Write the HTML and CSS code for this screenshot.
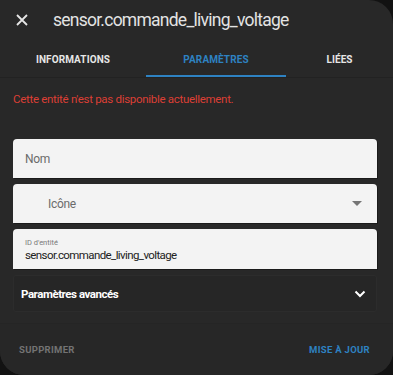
FILE: index.html
```html
<!DOCTYPE html>
<html lang="fr">
<head>
    <meta charset="UTF-8">
    <meta name="viewport" content="width=device-width, initial-scale=1.0">
    <title>sensor.commande_living_voltage</title>
    <link rel="stylesheet" href="styles.css">
</head>
<body>
    <div class="dialog">
        <div class="dialog__header">
            <button class="close-btn" aria-label="Fermer">
                <svg width="14" height="14" viewBox="0 0 14 14">
                    <path d="M2 2 L12 12 M12 2 L2 12" stroke="#e6e6e6" stroke-width="1.8" fill="none"/>
                </svg>
            </button>
            <div class="dialog__title">sensor.commande_living_voltage</div>
        </div>
        <div class="tabs">
            <div class="tab">Informations</div>
            <div class="tab tab--active">Paramètres</div>
            <div class="tab">Liées</div>
        </div>
        <div class="dialog__content">
            <p class="error">Cette entité n'est pas disponible actuellement.</p>
            <div class="fields">
                <div class="field">
                    <span class="field__placeholder">Nom</span>
                </div>
                <div class="field field--select">
                    <span class="field__placeholder field__placeholder--icon">Icône</span>
                    <svg class="field__arrow" width="10" height="5" viewBox="0 0 10 5">
                        <path d="M0 0 L10 0 L5 5 Z" fill="#757575"/>
                    </svg>
                </div>
                <div class="field field--filled">
                    <span class="field__label">ID d'entité</span>
                    <span class="field__value">sensor.commande_living_voltage</span>
                </div>
            </div>
            <div class="advanced">
                <span>Paramètres avancés</span>
                <svg width="12" height="8" viewBox="0 0 12 8">
                    <path d="M1.5 1.5 L6 6 L10.5 1.5" stroke="#ffffff" stroke-width="2" fill="none"/>
                </svg>
            </div>
        </div>
        <div class="dialog__actions">
            <span class="action action--muted">Supprimer</span>
            <span class="action action--primary">Mise à jour</span>
        </div>
    </div>
</body>
</html>
```

FILE: styles.css
```css
body {
    margin: 0;
    background-color: #121212;
    font-family: Roboto, "Liberation Sans", sans-serif;
}

.dialog {
    width: 393px;
    height: 375px;
    background-color: #282828;
    border-radius: 0 24px 24px 24px;
    overflow: hidden;
    display: flex;
    flex-direction: column;
}

.dialog__header {
    height: 40px;
    display: flex;
    align-items: center;
}

.close-btn {
    width: 44px;
    height: 40px;
    padding: 0 0 0 15px;
    border: none;
    background: none;
    display: flex;
    align-items: center;
}

.dialog__title {
    margin-left: 9px;
    font-size: 17.5px;
    color: #e3e3e3;
    letter-spacing: -0.75px;
}

.tabs {
    display: grid;
    grid-template-columns: 146px 140px 1fr;
    height: 37px;
    border-bottom: 1px solid #222222;
}

.tab {
    display: flex;
    align-items: center;
    justify-content: center;
    text-transform: uppercase;
    font-size: 10px;
    font-weight: 700;
    letter-spacing: 0.1px;
    color: #e6e6e6;
    padding-top: 1px;
    box-sizing: border-box;
}

.tab--active {
    color: #2e82c2;
    border-bottom: 2px solid #2e82c2;
    padding-top: 3px;
}

.dialog__content {
    padding: 0 16px 0 13px;
    flex: 1;
}

.error {
    margin: 14px 0 0;
    font-size: 11.5px;
    color: #dc3f35;
    letter-spacing: -0.3px;
}

.fields {
    margin-top: 33px;
    display: flex;
    flex-direction: column;
    gap: 6px;
}

.field {
    height: 39px;
    background-color: #f3f3f3;
    border-radius: 4px 4px 0 0;
    box-shadow: 1px 1px 0 #1a1a1a;
    display: flex;
    align-items: center;
    padding: 0 13px 0 12px;
}

.field__placeholder {
    font-size: 12px;
    color: #6b6b6b;
    letter-spacing: -0.3px;
}

.field__placeholder--icon {
    margin-left: 23px;
}

.field__arrow {
    margin-left: auto;
    margin-right: 2px;
}

.field--filled {
    flex-direction: column;
    align-items: flex-start;
    justify-content: center;
    gap: 1px;
    padding-top: 1px;
}

.field__label {
    font-size: 7.5px;
    color: #7a7a7a;
}

.field__value {
    font-size: 11.5px;
    color: #222222;
    letter-spacing: -0.6px;
}

.advanced {
    margin-top: 6px;
    height: 35px;
    border: 1px solid #2c2c2c;
    border-radius: 3px;
    background-color: #262626;
    display: flex;
    align-items: center;
    justify-content: space-between;
    padding: 0 10px 0 7px;
    font-size: 11.5px;
    font-weight: 700;
    letter-spacing: -0.45px;
    color: #ffffff;
}

.dialog__actions {
    height: 50px;
    border-top: 1px solid #252525;
    background-color: #272727;
    display: flex;
    align-items: center;
    justify-content: space-between;
    padding: 0 23px 1px 19px;
}

.action {
    text-transform: uppercase;
    font-size: 9.5px;
    font-weight: 700;
    letter-spacing: 0.3px;
}

.action--muted {
    color: #737373;
}

.action--primary {
    color: #2e82c2;
}
```
